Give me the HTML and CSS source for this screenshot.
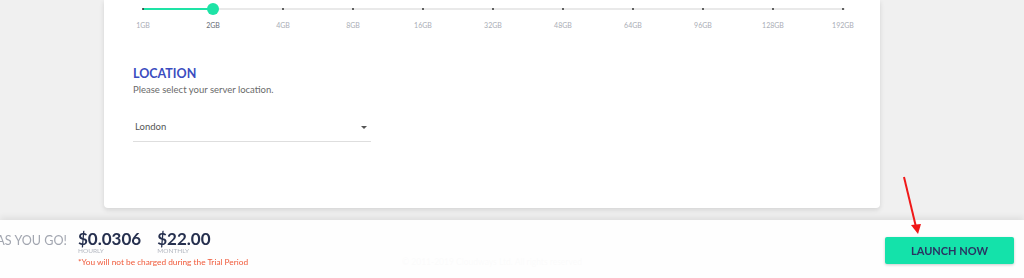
FILE: index.html
```html
<!DOCTYPE html>
<html>
<head>
<meta charset="utf-8">
<link rel="stylesheet" href="styles.css">
</head>
<body>
<main class="card">
  <div class="slider">
    <div class="step"><span class="dot"></span><span class="lbl">1GB</span></div>
    <div class="step active"><span class="knob"></span><span class="lbl">2GB</span></div>
    <div class="step"><span class="dot"></span><span class="lbl">4GB</span></div>
    <div class="step"><span class="dot"></span><span class="lbl">8GB</span></div>
    <div class="step"><span class="dot"></span><span class="lbl">16GB</span></div>
    <div class="step"><span class="dot"></span><span class="lbl">32GB</span></div>
    <div class="step"><span class="dot"></span><span class="lbl">48GB</span></div>
    <div class="step"><span class="dot"></span><span class="lbl">64GB</span></div>
    <div class="step"><span class="dot"></span><span class="lbl">96GB</span></div>
    <div class="step"><span class="dot"></span><span class="lbl">128GB</span></div>
    <div class="step"><span class="dot"></span><span class="lbl">192GB</span></div>
  </div>
  <section class="location">
    <h2 class="title">LOCATION</h2>
    <p class="sub">Please select your server location.</p>
    <div class="select">
      <span>London</span>
      <span class="caret"></span>
    </div>
  </section>
</main>
<footer class="copy">© 2011-2019 Cloudways Ltd. All rights reserved</footer>

<div class="bar">
  <div class="pricing">
    <div class="payg"><span>PAY AS YOU GO!</span></div>
    <div class="prices">
      <div class="nums">
        <div class="price"><span class="amt">$0.0306</span><span class="per">HOURLY</span></div>
        <div class="price"><span class="amt">$22.00</span><span class="per">MONTHLY</span></div>
      </div>
      <p class="note">*You will not be charged during the Trial Period</p>
    </div>
  </div>
  <button class="launch">LAUNCH NOW</button>
</div>

<svg class="arrow" width="40" height="70" viewBox="0 0 40 70">
  <line x1="3" y1="2" x2="15" y2="52" stroke="#f01818" stroke-width="2"/>
  <polygon points="10,50 20,49 17,59" fill="#f01818"/>
</svg>
</body>
</html>
```

FILE: styles.css
```css
html, body {
  margin: 0;
  padding: 0;
}
body {
  width: 1024px;
  height: 278px;
  overflow: hidden;
  background: #f0f0f0;
  font-family: "Lato", "Open Sans", sans-serif;
  position: relative;
}
.card {
  margin-left: 104px;
  width: 776px;
  height: 208px;
  box-sizing: border-box;
  background: #fff;
  border-radius: 0 0 4px 4px;
  box-shadow: 0 2px 5px rgba(0,0,0,0.12);
  padding: 3px 0 0 4px;
}
.slider {
  display: grid;
  grid-template-columns: repeat(11, 70px);
  background:
    linear-gradient(#1ee3a6, #1ee3a6) 35px 5px / 70px 2px no-repeat,
    linear-gradient(#e9e9e9, #e9e9e9) 35px 5px / 702px 2px no-repeat;
}
.step {
  display: flex;
  flex-direction: column;
  align-items: center;
}
.dot {
  width: 2px;
  height: 2px;
  margin: 5px 0;
  background: #333;
  border-radius: 50%;
}
.knob {
  width: 12px;
  height: 12px;
  border-radius: 50%;
  background: #1ee3a6;
}
.lbl {
  font-size: 7px;
  color: #a9adb5;
  margin-top: 6px;
}
.step.active .lbl {
  color: #666b75;
}
.location {
  margin: 38px 0 0 25px;
}
.title {
  margin: 0;
  font-size: 12.5px;
  font-weight: 700;
  color: #3b4cc0;
  line-height: 14px;
}
.sub {
  margin: 3px 0 0;
  font-size: 9.5px;
  color: #6a6a6a;
  line-height: 12px;
}
.select {
  margin-top: 23px;
  width: 238px;
  height: 23px;
  box-sizing: border-box;
  border-bottom: 1px solid #dedede;
  display: flex;
  align-items: flex-start;
  justify-content: space-between;
  padding: 2px 4px 0 2px;
  font-size: 9.5px;
  color: #555;
}
.caret {
  width: 0;
  height: 0;
  margin-top: 5px;
  border-left: 3px solid transparent;
  border-right: 3px solid transparent;
  border-top: 3px solid #555;
}
.copy {
  text-align: center;
  width: 984px;
  margin-top: 49px;
  font-size: 8.5px;
  color: #cfcfcf;
}
.bar {
  position: fixed;
  left: 0;
  right: 0;
  bottom: 0;
  height: 58px;
  background: rgba(255,255,255,0.9);
  box-shadow: 0 -3px 6px rgba(0,0,0,0.07);
  display: flex;
  justify-content: space-between;
  align-items: flex-start;
}
.pricing {
  display: flex;
  align-items: flex-start;
  padding-top: 10px;
}
.payg {
  width: 67px;
  display: flex;
  justify-content: flex-end;
  white-space: nowrap;
  font-size: 12.6px;
  color: #a2a6b0;
  margin-top: 3px;
}
.payg span {
  flex: none;
}
.prices {
  margin-left: 11px;
}
.nums {
  display: flex;
  gap: 16px;
}
.price {
  display: flex;
  flex-direction: column;
}
.amt {
  font-size: 17px;
  font-weight: 700;
  color: #26304f;
  line-height: 18px;
}
.per {
  font-size: 6.5px;
  color: #b3b7c0;
  line-height: 7px;
  margin-top: -1px;
}
.note {
  margin: 3px 0 0;
  font-size: 8.3px;
  color: #f05a3a;
}
.launch {
  margin: 17px 10px 0 0;
  width: 129px;
  height: 27px;
  border: none;
  border-radius: 2px;
  background: #14e2aa;
  box-shadow: 0 1px 3px rgba(0,0,0,0.2);
  color: #2a3362;
  font-family: "Lato", sans-serif;
  font-weight: 700;
  font-size: 11px;
  padding: 0;
}
.arrow {
  position: absolute;
  left: 901px;
  top: 175px;
}
```
